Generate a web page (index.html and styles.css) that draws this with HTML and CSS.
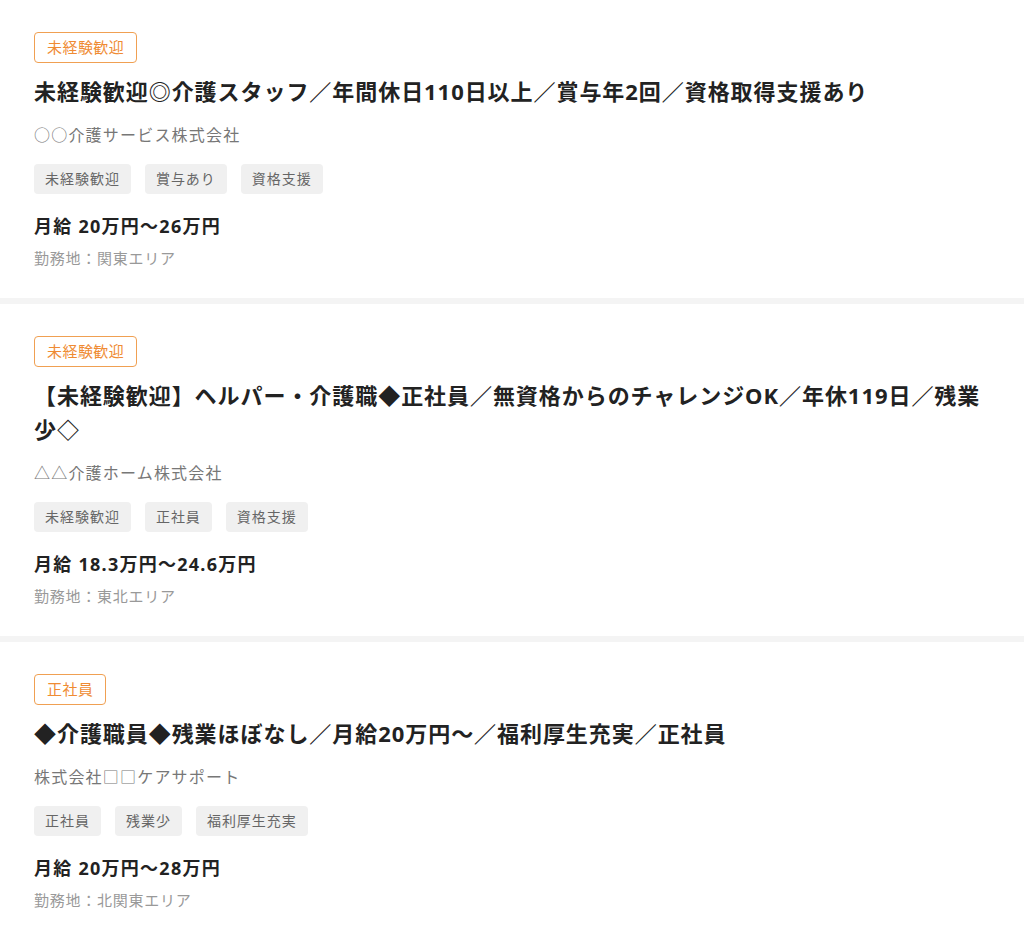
FILE: index.html
```html
<!DOCTYPE html>
<html lang="ja">
<head>
<meta charset="utf-8">
<title>求人一覧</title>
<link rel="stylesheet" href="styles.css">
</head>
<body>
<main class="list">
  <article class="card">
    <span class="badge">未経験歓迎</span>
    <h2 class="title">未経験歓迎◎介護スタッフ／年間休日110日以上／賞与年2回／資格取得支援あり</h2>
    <p class="company">○○介護サービス株式会社</p>
    <ul class="tags">
      <li class="tag">未経験歓迎</li>
      <li class="tag">賞与あり</li>
      <li class="tag">資格支援</li>
    </ul>
    <p class="salary">月給 20万円〜26万円</p>
    <p class="location">勤務地：関東エリア</p>
  </article>
  <article class="card">
    <span class="badge">未経験歓迎</span>
    <h2 class="title">【未経験歓迎】ヘルパー・介護職◆正社員／無資格からのチャレンジOK／年休119日／残業少◇</h2>
    <p class="company">△△介護ホーム株式会社</p>
    <ul class="tags">
      <li class="tag">未経験歓迎</li>
      <li class="tag">正社員</li>
      <li class="tag">資格支援</li>
    </ul>
    <p class="salary">月給 18.3万円〜24.6万円</p>
    <p class="location">勤務地：東北エリア</p>
  </article>
  <article class="card">
    <span class="badge">正社員</span>
    <h2 class="title">◆介護職員◆残業ほぼなし／月給20万円〜／福利厚生充実／正社員</h2>
    <p class="company">株式会社□□ケアサポート</p>
    <ul class="tags">
      <li class="tag">正社員</li>
      <li class="tag">残業少</li>
      <li class="tag">福利厚生充実</li>
    </ul>
    <p class="salary">月給 20万円〜28万円</p>
    <p class="location">勤務地：北関東エリア</p>
  </article>
</main>
</body>
</html>
```

FILE: styles.css
```css
* { box-sizing: border-box; }

html, body {
  margin: 0;
  padding: 0;
  background: #ffffff;
}

body {
  font-family: "Noto Sans", "Noto Sans CJK JP", sans-serif;
  color: #222222;
}

.list {
  display: flex;
  flex-direction: column;
  gap: 6px;
  background: #f4f4f4;
}

.card {
  background: #ffffff;
  padding: 32px 34px 29px;
  display: flex;
  flex-direction: column;
  align-items: flex-start;
}

.badge {
  display: inline-block;
  border: 1px solid #f0a052;
  border-radius: 4px;
  color: #ef8b33;
  font-size: 15px;
  line-height: 21px;
  padding: 4px 12px;
  letter-spacing: 0.03em;
}

.title {
  margin: 11px 0 0;
  font-size: 22px;
  font-weight: 700;
  line-height: 34px;
  color: #222222;
  letter-spacing: 0.043em;
}

.company {
  margin: 15px 0 0;
  font-size: 16px;
  line-height: 24px;
  color: #777777;
  letter-spacing: 0.075em;
}

.tags {
  list-style: none;
  margin: 17px 0 0;
  padding: 0;
  display: flex;
  gap: 14px;
}

.tag {
  background: #f0f0f0;
  border-radius: 4px;
  color: #666666;
  font-size: 14px;
  line-height: 30px;
  padding: 0 11px;
  letter-spacing: 0.07em;
}

.salary {
  margin: 20px 0 0;
  font-size: 18px;
  font-weight: 700;
  line-height: 24px;
  color: #222222;
  letter-spacing: 0.07em;
}

.location {
  margin: 10px 0 0;
  font-size: 15px;
  line-height: 21px;
  color: #999999;
  letter-spacing: 0.05em;
}
```
